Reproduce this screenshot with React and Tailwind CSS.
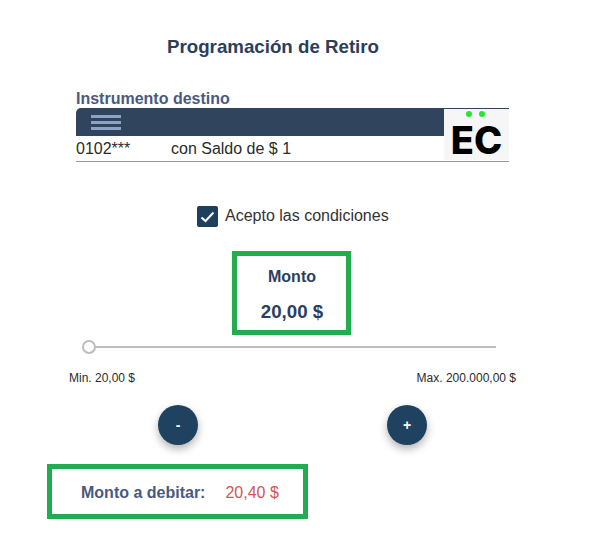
const App = () => {
  return (
    <div className="w-[592px] h-[533px] bg-white overflow-hidden font-['Liberation_Sans',Arial,sans-serif] text-[#212529]">
      <h1 className="pt-[36px] pl-[167px] text-[18.72px] leading-[21px] font-bold text-[#2c3e5c]">
        Programación de Retiro
      </h1>

      <div className="mt-[32px] ml-[76px] w-[433px]">
        <div className="text-[16px] leading-[20px] font-bold text-[#4a5a7e] -mb-[1px]">
          Instrumento destino
        </div>
        <div className="flex h-[54px] border-b border-[#999999]">
          <div className="flex-1 min-w-0">
            <div className="h-[28px] bg-[#30445e] rounded-tl-[5px] pl-[15px] flex flex-col justify-center gap-[3px]">
              <span className="block w-[30px] h-[3px] bg-[#8ba3c4]" />
              <span className="block w-[30px] h-[3px] bg-[#8ba3c4]" />
              <span className="block w-[30px] h-[3px] bg-[#8ba3c4]" />
            </div>
            <div className="flex pt-[3px] text-[16px] leading-[20px] text-[#2b2b2b]">
              <span className="w-[95px]">0102***</span>
              <span>con Saldo de $ 1</span>
            </div>
          </div>
          <div className="w-[65px] h-[52px] bg-[#f6f6f6] border-t border-[#30445e] flex flex-col items-center">
            <div className="flex gap-[7px] mt-[2px] -ml-[2px]">
              <span className="w-[6px] h-[6px] rounded-full bg-[#22e82c]" />
              <span className="w-[6px] h-[6px] rounded-full bg-[#22e82c]" />
            </div>
            <div className="mt-[3px] font-['Inter',sans-serif] text-[38px] leading-[40px] font-extrabold text-black">EC</div>
          </div>
        </div>
      </div>

      <div className="mt-[44px] ml-[197px] flex items-center h-[21px]">
        <span className="w-[21px] h-[21px] rounded-[2px] bg-[#1f3f5f] flex items-center justify-center">
          <svg width="15" height="12" viewBox="0 0 15 12" fill="none">
            <path d="M1.5 6.5 L5.5 10 L13.5 1.5" stroke="#ffffff" strokeWidth="2" />
          </svg>
        </span>
        <span className="ml-[7px] -mt-[2px] text-[16px] leading-[20px] text-[#333333]">Acepto las condiciones</span>
      </div>

      <div className="mt-[24px] ml-[232px] w-[119px] h-[84px] border-[5px] border-[#22ac4f] flex flex-col items-center">
        <div className="mt-[11px] ml-[1px] text-[16px] leading-[19px] font-bold text-[#2c3e5c]">Monto</div>
        <div className="mt-[15px] ml-[1px] text-[18.72px] leading-[22px] font-bold text-[#2c3e5c]">20,00 $</div>
      </div>

      <div className="mt-[5px] ml-[82px] w-[414px] h-[14px] flex items-center relative">
        <span className="w-[14px] h-[14px] rounded-full border-[2px] border-[#bdbdbd] bg-white shrink-0" />
        <span className="flex-1 h-[2px] bg-[#bdbdbd]" />
      </div>

      <div className="mt-[17px] ml-[69px] w-[447px] flex justify-between text-[12px] leading-[14px] text-[#2b2b2b]">
        <span>Min. 20,00 $</span>
        <span>Max. 200.000,00 $</span>
      </div>

      <div className="mt-[20px] ml-[158px] w-[269px] flex justify-between">
        <button className="w-[40px] h-[40px] rounded-full bg-[#1f4261] text-white text-[14px] font-bold shadow-[0_4px_8px_rgba(0,0,0,0.3)]">
          -
        </button>
        <button className="w-[40px] h-[40px] rounded-full bg-[#1f4261] text-white text-[14px] font-bold shadow-[0_4px_8px_rgba(0,0,0,0.3)]">
          +
        </button>
      </div>

      <div className="mt-[19px] ml-[47px] w-[261px] h-[55px] border-[5px] border-[#22ac4f] flex items-center pl-[29px] pt-[2px]">
        <span className="text-[16px] leading-[20px] font-bold text-[#4a5a7e]">Monto a debitar:</span>
        <span className="ml-[20px] text-[16px] leading-[20px] text-[#d9534f]">20,40 $</span>
      </div>
    </div>
  );
};

export default App;
